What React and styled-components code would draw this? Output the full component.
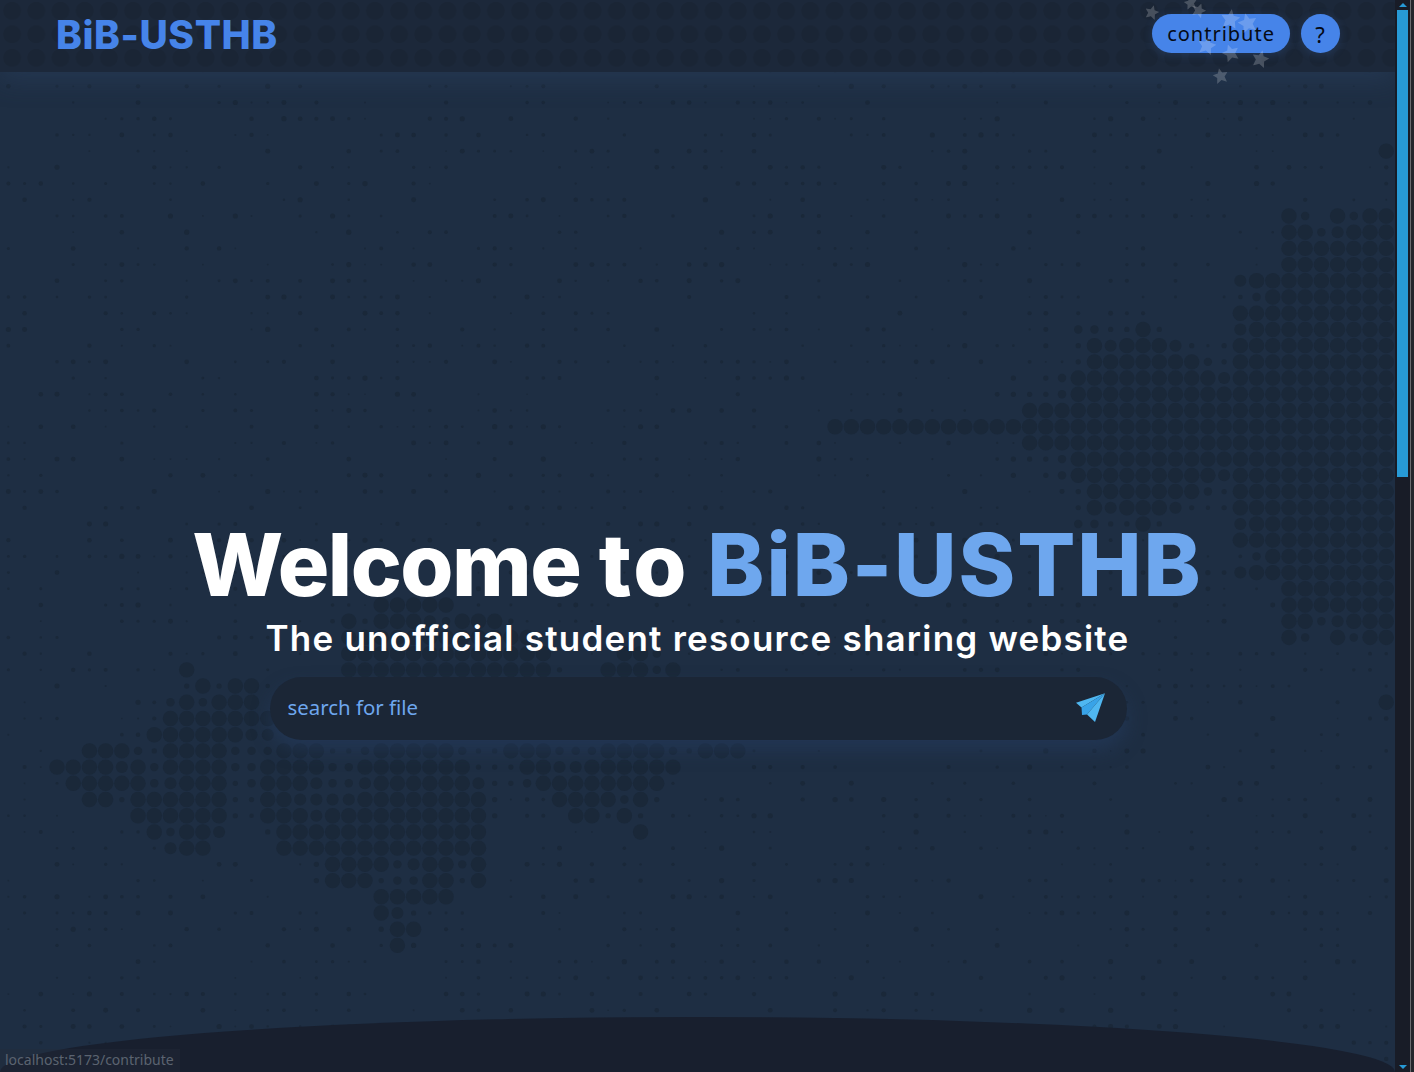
import React from "react";
import styled, { createGlobalStyle } from "styled-components";

const GRID_X = 57;
const GRID_Y = 426.7;
const STEP = 16.21;
const SIZES = { b: 7.7, m: 6, s: 4.2, t: 2.6 };

// dot rows of the map: row index -> "from-to" runs, suffix = dot size
const LEFT_ROWS = {
  11: "20-24",
  12: "18 19t 20-22 23m 24s 25-27 28t",
  13: "18-29",
  14: "18-30 35-36 37s",
  15: "8 18-30 31t 34-36 37s 38",
  16: "8t 9 10t 11-12",
  17: "7s 8 9s 10-12",
  18: "7-12 13",
  19: "6 7-11 12m 13m",
  20: "2-4 5s 6t 7-10 11s 12s 13s 14-16 17t 18t 19s 20-24 25s 26t 27t 28-30 31s 32s 33s 34-37 38s 39t 40-42",
  21: "0-3 4m 5 6s 7-10 11s 12s 13-16 17s 18s 19-25 26t 27t 28t 29-30 31m 32m 33-38",
  22: "1-5 6s 7m 8-10 11t 12s 13-15 16m 17s 18s 19m 20-25 26m 27t 28t 29s 30-37",
  23: "2-3 4t 5-10 11t 12t 13-14 15m 16m 17m 18m 19-26 27t 31-34 35s 36 37t",
  24: "5-10 11t 13-15 16m 17-26 27t 32-33 34t 35 36t",
  25: "6 7s 8-9 10m 13t 14-26 36",
  26: "7m 8-9 14-26",
  27: "16t 17-20 21s 22m 23-24 25s 26",
  28: "16t 17-19 20t 21s 22s 23-24 25t 26",
  29: "20-24",
  30: "20 21m 22t",
  31: "20t 21-22",
  32: "21 22t",
};

// the right part is mirrored around row 0
const RIGHT_ROWS = {
  0: "48-82",
  1: "60-82",
  2: "59t 60t 61t 62s 63-82",
  3: "59t 61t 62s 63-71 72m 73-82",
  4: "63t 64-70 71s 72t 73-82",
  5: "63t 64 65m 66-68 69m 70t 72t 73-82",
  6: "63s 64s 65t 66t 67 68t 73m 74-82",
  7: "73-82",
  8: "74s 75-82",
  9: "73m 74-82",
  10: "76-82",
  11: "76-82",
  12: "76-77 78s 79m 80-82",
  13: "76 77s 79 80s 81-82",
  17: "82",
};

const parseRow = (text) => {
  const cells = {};
  text.split(" ").forEach((token) => {
    const match = token.match(/^(\d+)(?:-(\d+))?([mst]?)$/);
    const from = Number(match[1]);
    const to = match[2] ? Number(match[2]) : from;
    for (let i = from; i <= to; i++) cells[i] = SIZES[match[3] || "b"];
  });
  return cells;
};

const buildDots = () => {
  const rows = {};
  const put = (k, text) => {
    rows[k] = { ...(rows[k] || {}), ...parseRow(text) };
  };
  Object.entries(LEFT_ROWS).forEach(([k, text]) => put(Number(k), text));
  Object.entries(RIGHT_ROWS).forEach(([k, text]) => {
    put(Number(k), text);
    if (Number(k) !== 0) put(-Number(k), text);
  });

  const dots = [];
  for (let k = -26; k <= 39; k++) {
    for (let i = -3; i <= 83; i++) {
      let r = rows[k] && rows[k][i];
      if (!r) {
        // speckle between the land masses
        const noise = Math.abs(Math.sin(i * 12.9898 + k * 78.233) * 43758.5453) % 1;
        r = noise > 0.55 ? 0.8 + (noise - 0.55) * 4 : 0;
      }
      if (r) dots.push({ x: GRID_X + i * STEP, y: GRID_Y + k * STEP, r });
    }
  }
  return dots;
};

const DOTS = buildDots();

const STARS = [
  { x: 1152, y: 12, size: 14, turn: 15 },
  { x: 1190, y: 2, size: 13, turn: -10 },
  { x: 1199, y: 10, size: 14, turn: 20 },
  { x: 1230, y: 18, size: 19, turn: 8 },
  { x: 1247, y: 22, size: 19, turn: -14 },
  { x: 1207, y: 45, size: 18, turn: 12 },
  { x: 1230, y: 52, size: 17, turn: -18 },
  { x: 1260, y: 58, size: 17, turn: 14 },
  { x: 1220, y: 75, size: 15, turn: -12 },
];

const GlobalStyle = createGlobalStyle`
  html, body {
    margin: 0;
    padding: 0;
    background: #1e2e43;
    overflow: hidden;
  }
`;

const Screen = styled.div`
  display: flex;
  width: 1414px;
  height: 1072px;
  overflow: hidden;
  position: relative;
`;

const Page = styled.main`
  flex: 1;
  position: relative;
  display: flex;
  flex-direction: column;
  background: #1e2e43;
  overflow: hidden;
`;

const MapLayer = styled.svg`
  position: absolute;
  top: 0;
  left: 0;
  width: 1395px;
  height: 1072px;
  fill: #1a2839;
`;

const Nav = styled.header`
  position: relative;
  flex: none;
  height: 72px;
  box-sizing: border-box;
  display: flex;
  align-items: center;
  justify-content: space-between;
  padding: 0 55px 5px 56px;
  background-color: #1c283a;
  background-image: radial-gradient(circle, #1a2535 8.6px, transparent 9.2px);
  background-size: 24.2px 23.5px;
  background-position: 0 -1px;
  box-shadow: 0 8px 26px rgba(48, 70, 104, 0.38);
`;

const Logo = styled.a`
  font-family: Inter, "Liberation Sans", sans-serif;
  font-weight: 800;
  font-size: 39px;
  letter-spacing: 0.55px;
  color: #4684e9;
  text-decoration: none;
  margin-top: 2px;
`;

const NavActions = styled.div`
  display: flex;
  align-items: center;
  gap: 11px;
`;

const NavButton = styled.button`
  height: 39px;
  min-width: 39px;
  padding: ${(p) => (p.$round ? "0" : "0 15px")};
  border: 0;
  border-radius: 20px;
  background: #4684e9;
  color: #050a14;
  font-family: "Noto Sans", sans-serif;
  font-size: ${(p) => (p.$round ? "22px" : "20px")};
  letter-spacing: 1px;
  box-shadow: 0 2px 10px rgba(70, 132, 233, 0.18);
`;

const Star = styled.svg`
  position: absolute;
  fill: rgba(255, 255, 255, 0.2);
`;

const Hero = styled.section`
  position: relative;
  flex: 1;
  display: flex;
  flex-direction: column;
  align-items: center;
  padding-top: 442px;
`;

const Title = styled.h1`
  margin: 0;
  font-family: Inter, "Liberation Sans", sans-serif;
  font-weight: 800;
  font-size: 86px;
  line-height: 102px;
  letter-spacing: -1.5px;
  word-spacing: 1px;
  color: #ffffff;
  white-space: nowrap;
`;

const WideWord = styled.span`
  letter-spacing: 2.5px;
`;

const Accent = styled.span`
  color: #6ea7ee;
  letter-spacing: 1.9px;
`;

const Subtitle = styled.h2`
  margin: 0;
  font-family: Inter, "Liberation Sans", sans-serif;
  font-weight: 600;
  font-size: 35px;
  line-height: 44px;
  letter-spacing: 1.22px;
  color: #ffffff;
  white-space: nowrap;
`;

const SearchBar = styled.form`
  width: 857px;
  height: 63px;
  margin: 17px 0 0 1px;
  box-sizing: border-box;
  display: flex;
  align-items: center;
  justify-content: space-between;
  padding: 0 22px 0 18px;
  border-radius: 32px;
  background: #1b2636;
  box-shadow: 0 10px 18px rgba(38, 62, 100, 0.5);
`;

const SearchText = styled.span`
  font-family: "Noto Sans", sans-serif;
  font-size: 20.4px;
  color: #6ea7ee;
  margin-bottom: 4px;
`;

const PlaneSvg = styled.svg`
  margin-bottom: 2px;
`;

const Curve = styled.div`
  position: relative;
  flex: none;
  height: 55px;
  background: #181f2e;
  border-radius: 50% 50% 0 0 / 100% 100% 0 0;
`;

const StatusTip = styled.div`
  position: absolute;
  left: 0;
  bottom: 0;
  padding: 1px 6px 3px 5px;
  height: 23px;
  box-sizing: border-box;
  font-family: "Noto Sans", sans-serif;
  font-size: 14px;
  line-height: 19px;
  color: #5b6370;
  background: rgba(36, 42, 56, 0.35);
`;

const Rail = styled.aside`
  flex: none;
  width: 19px;
  display: flex;
  background: #23262c;
`;

const Track = styled.div`
  width: 15px;
  display: flex;
  flex-direction: column;
  align-items: center;
  background: #181c27;
  border-right: 1px solid #6a6c70;
  box-sizing: content-box;
`;

const Arrow = styled.div`
  flex: none;
  width: 0;
  height: 0;
  margin: 3px 0;
  border-left: 4px solid transparent;
  border-right: 4px solid transparent;
  border-${(p) => (p.$up ? "bottom" : "top")}: 4px solid #279ad6;
`;

const Thumb = styled.div`
  flex: none;
  width: 11px;
  height: 467px;
  background: #279ad6;
`;

const Spacer = styled.div`
  flex: 1;
`;

const PlaneIcon = () => (
  <PlaneSvg width="30" height="31" viewBox="0 0 30 31" aria-hidden="true">
    <polygon points="1,10.7 30,1.3 6.5,15.5" fill="#4fb7f1" />
    <polygon points="6.5,15.5 30,1.3 12,22.5 7,23" fill="#38a3e8" />
    <polygon points="30,1.3 20,30 12,22.5" fill="#4fb7f1" />
  </PlaneSvg>
);

const StarIcon = ({ x, y, size, turn }) => (
  <Star
    viewBox="0 0 24 24"
    width={size}
    height={size}
    style={{ left: x - size / 2, top: y - size / 2, transform: `rotate(${turn}deg)` }}
  >
    <polygon points="12,0 15.5,8 24,9 18,15 20,24 12,19.5 4,24 6,15 0,9 8.5,8" />
  </Star>
);

const App = () => {
  return (
    <Screen>
      <GlobalStyle />
      <Page>
        <MapLayer viewBox="0 0 1395 1072" aria-hidden="true">
          {DOTS.map((d) => (
            <circle key={`${d.x}-${d.y}`} cx={d.x} cy={d.y} r={d.r} />
          ))}
        </MapLayer>
        <Nav>
          <Logo>BiB-USTHB</Logo>
          <NavActions>
            <NavButton>contribute</NavButton>
            <NavButton $round>?</NavButton>
          </NavActions>
        </Nav>
        {STARS.map((s) => (
          <StarIcon key={`${s.x}-${s.y}`} {...s} />
        ))}
        <Hero>
          <Title>
            Welcome <WideWord>to</WideWord> <Accent>BiB-USTHB</Accent>
          </Title>
          <Subtitle>The unofficial student resource sharing website</Subtitle>
          <SearchBar>
            <SearchText>search for file</SearchText>
            <PlaneIcon />
          </SearchBar>
        </Hero>
        <Curve />
        <StatusTip>localhost:5173/contribute</StatusTip>
      </Page>
      <Rail>
        <Track>
          <Arrow $up />
          <Thumb />
          <Spacer />
          <Arrow />
        </Track>
      </Rail>
    </Screen>
  );
};

export default App;
